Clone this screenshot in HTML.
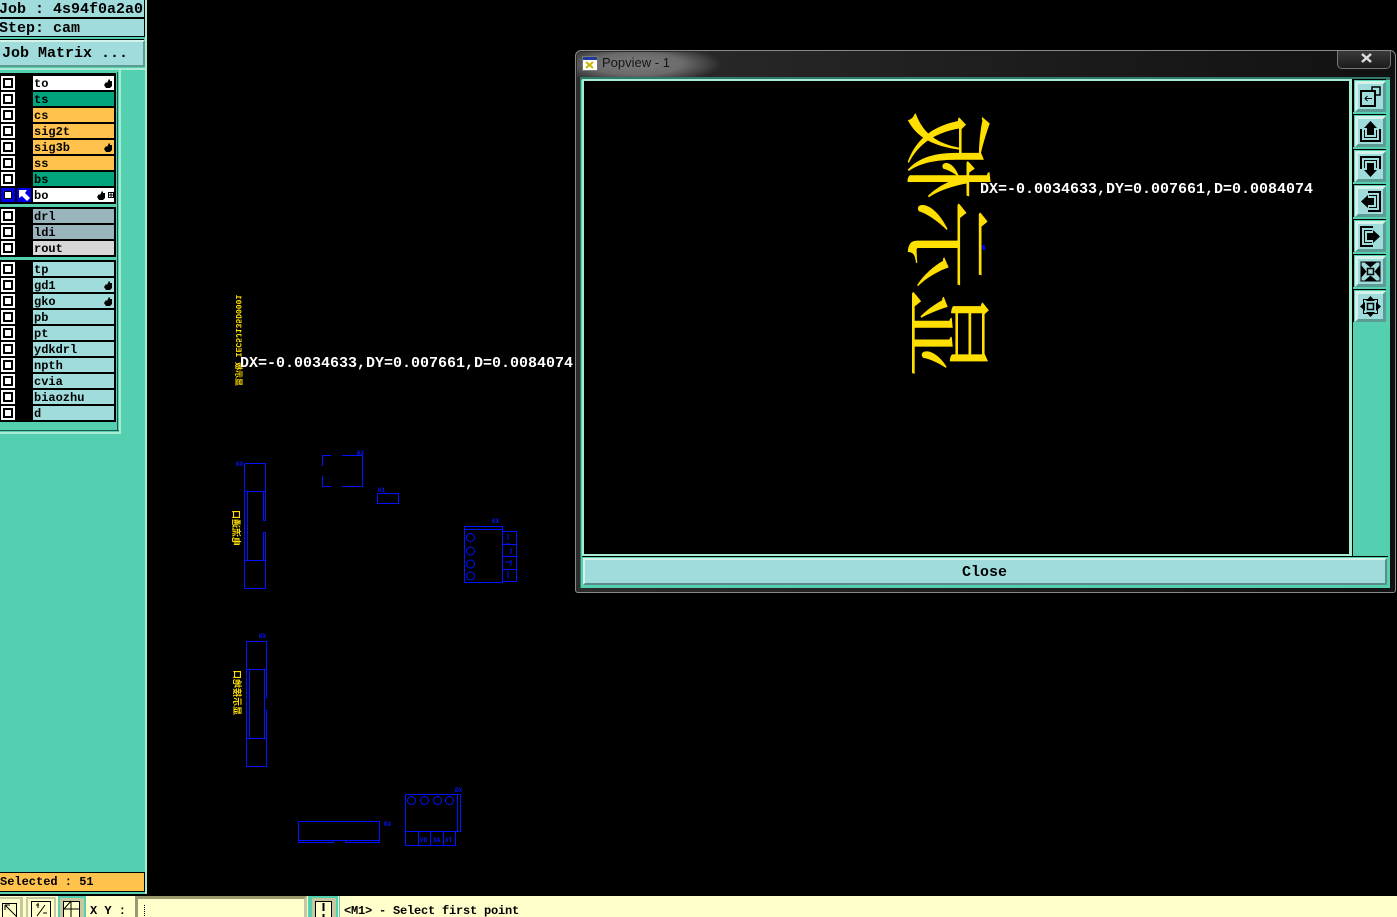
<!DOCTYPE html>
<html>
<head>
<meta charset="utf-8">
<style>
html,body{margin:0;padding:0;background:#000;}
#p{position:relative;width:1397px;height:917px;overflow:hidden;background:#000;font-family:"Liberation Mono","Noto Sans CJK SC",monospace;font-weight:bold;color:#000;}
#p div,#p svg{position:absolute;}
.t{white-space:pre;}
.r{left:33px;width:81px;height:14px;font-size:12px;line-height:16px;padding:0;text-indent:1px;white-space:pre;}
.c{left:1px;width:10px;height:10px;border:2px solid #fff;outline:0;background:#000;box-shadow:none;}
.c i{position:absolute;display:block;left:2px;top:2px;width:6px;height:6px;background:#fff;}
.w{background:#fff}.g{background:#00a57d}.o{background:#ffc34d}.s{background:#9ab4bc}.l{background:#d8d8d8}.b{background:#a0dcdc}
.btn{left:1355px;width:31px;height:31px;background:#a0dcdc;box-sizing:border-box;border:3px solid;border-color:#d4f2ea #5c9a94 #5c9a94 #d4f2ea;box-shadow:0 0 0 1px #54cfb0,-1px -1px 0 1px #000;}
.dx{color:#fff;font-size:15px;line-height:17px;white-space:pre;}
.y{color:#ffdf00;white-space:pre;transform-origin:0 0;transform:matrix(0,-1,-1,0,0,0);}
</style>
</head>
<body>
<div id="p">

<!-- left panel -->
<div style="left:0;top:0;width:146px;height:894px;background:#54cfb0"></div>
<div style="left:145px;top:0;width:2px;height:894px;background:#a8ecd4"></div>
<div style="left:0;top:0;width:144px;height:17px;background:#a0dcdc;border-right:1px solid #000;border-bottom:1px solid #000"></div>
<div class="t" style="left:-1px;top:1px;font-size:15px;line-height:17px">Job : 4s94f0a2a0</div>
<div style="left:0;top:18px;width:144px;height:17px;background:#a0dcdc;border:1px solid #000;border-left:0"></div>
<div class="t" style="left:-1px;top:20px;font-size:15px;line-height:17px;">Step: cam</div>
<div style="left:0;top:39px;width:144px;height:1px;background:#000"></div>
<div style="left:0;top:40px;width:143px;height:23px;background:#a0dcdc;border-top:2px solid #d4f2ea;border-right:2px solid #5c9a94;border-bottom:2px solid #5c9a94;box-sizing:content-box"></div>
<div class="t" style="left:2px;top:45px;font-size:15px;line-height:17px">Job Matrix ...</div>
<div style="left:0;top:68px;width:147px;height:2px;background:#a8ecd4"></div>
<div style="left:119px;top:70px;width:2px;height:364px;background:#a8ecd4"></div>
<div style="left:0;top:432px;width:121px;height:2px;background:#a8ecd4"></div>
<div style="left:0;top:430px;width:119px;height:1px;background:#1c5a4c"></div>
<div style="left:117px;top:72px;width:1px;height:359px;background:#1c5a4c"></div>

<!-- layer groups -->
<div style="left:0;top:73px;width:116px;height:131px;background:#000"></div>
<div style="left:0;top:207px;width:116px;height:50px;background:#000"></div>
<div style="left:0;top:260px;width:116px;height:162px;background:#000"></div>

<div class="r w" style="top:76px">to</div><div class="c" style="top:76px"><i></i></div>
<div class="r g" style="top:92px">ts</div><div class="c" style="top:92px"><i></i></div>
<div class="r o" style="top:108px">cs</div><div class="c" style="top:108px"><i></i></div>
<div class="r o" style="top:124px">sig2t</div><div class="c" style="top:124px"><i></i></div>
<div class="r o" style="top:140px">sig3b</div><div class="c" style="top:140px"><i></i></div>
<div class="r o" style="top:156px">ss</div><div class="c" style="top:156px"><i></i></div>
<div class="r g" style="top:172px">bs</div><div class="c" style="top:172px"><i></i></div>
<div class="r w" style="top:188px">bo</div>
<div style="left:1px;top:188px;width:14px;height:14px;background:#0000e8"></div>
<div style="left:4px;top:191px;width:8px;height:8px;background:#000"></div>
<div style="left:5px;top:192px;width:6px;height:6px;background:#fff"></div>
<div style="left:17px;top:188px;width:14px;height:14px;background:#0000e8"></div>
<svg style="left:17px;top:188px" width="14" height="14"><path d="M2 2H10L8 5 13 10 10 13 5 8 2 10Z" fill="#fff"/></svg>

<div class="r s" style="top:209px">drl</div><div class="c" style="top:209px"><i></i></div>
<div class="r s" style="top:225px">ldi</div><div class="c" style="top:225px"><i></i></div>
<div class="r l" style="top:241px">rout</div><div class="c" style="top:241px"><i></i></div>

<div class="r b" style="top:262px">tp</div><div class="c" style="top:262px"><i></i></div>
<div class="r b" style="top:278px">gd1</div><div class="c" style="top:278px"><i></i></div>
<div class="r b" style="top:294px">gko</div><div class="c" style="top:294px"><i></i></div>
<div class="r b" style="top:310px">pb</div><div class="c" style="top:310px"><i></i></div>
<div class="r b" style="top:326px">pt</div><div class="c" style="top:326px"><i></i></div>
<div class="r b" style="top:342px">ydkdrl</div><div class="c" style="top:342px"><i></i></div>
<div class="r b" style="top:358px">npth</div><div class="c" style="top:358px"><i></i></div>
<div class="r b" style="top:374px">cvia</div><div class="c" style="top:374px"><i></i></div>
<div class="r b" style="top:390px">biaozhu</div><div class="c" style="top:390px"><i></i></div>
<div class="r b" style="top:406px">d</div><div class="c" style="top:406px"><i></i></div>

<!-- hand markers -->
<svg style="left:0;top:0" width="120" height="310">
<defs><path id="h" d="M0 6L2 3 3 4 5 0 6 1 6 2 8 2V7L6 9H2Z" fill="#000"/></defs>
<use href="#h" x="104" y="79"/><use href="#h" x="104" y="143"/><use href="#h" x="97" y="191"/>
<use href="#h" x="104" y="281"/><use href="#h" x="104" y="297"/>
<path d="M108.500 192.500h5v5h-5zM111 192v6M108 195h6" fill="none" stroke="#000" stroke-width="1"/>
</svg>

<!-- selected -->
<div style="left:0;top:872px;width:144px;height:18px;background:#ffc34d;border:1px solid #000;border-left:0"></div>
<div class="t" style="left:0;top:874px;font-size:12px;line-height:17px">Selected : 51</div>

<!-- bottom bar -->
<div style="left:0;top:896px;width:1397px;height:21px;background:#ffffcc"></div>
<div style="left:0;top:897px;width:23px;height:20px;background:#ffffcc;border-top:2px solid #c8c8a0;border-right:3px solid #c8c8a0;box-sizing:border-box"></div>
<div style="left:26px;top:897px;width:30px;height:20px;border:2px solid #c8c8a0;border-bottom:0;box-sizing:border-box"></div>
<div style="left:58px;top:896px;width:28px;height:21px;border:2px solid #54cfb0;border-bottom:0;box-sizing:border-box;background:#c8c8a0"></div>
<div style="left:63px;top:901px;width:17px;height:16px;background:#ffffcc;border:1px solid #000;border-bottom:0;box-sizing:border-box"></div>
<div style="left:308px;top:896px;width:2px;height:21px;background:#54cfb0"></div>
<div style="left:310px;top:896px;width:28px;height:21px;border:2px solid #54cfb0;border-bottom:0;box-sizing:border-box;background:#c8c8a0"></div>
<div style="left:339px;top:896px;width:1px;height:21px;background:#54cfb0"></div>
<div style="left:315px;top:901px;width:17px;height:16px;background:#ffffcc;border:1px solid #000;border-bottom:0;box-sizing:border-box"></div>
<div style="left:135px;top:896px;width:172px;height:21px;box-sizing:border-box;border:3px solid #c8c8a0;border-top:3px solid #9a9a70;border-left:3px solid #9a9a70;border-bottom:0"></div>
<svg style="left:0;top:896px" width="345" height="21">
<path d="M2.500 21V7.500H16.500V21M5 9V14M5 9H10M5 9L16 20" fill="none" stroke="#000"/>
<path d="M31.500 21V5.500H50.500V21M37 20L45 9" fill="none" stroke="#000"/>
<path d="M36 9h3M38 7v5M43 17h4" stroke="#000"/>
<path d="M64 13H79M71 5V21M71 5 64 13" fill="none" stroke="#000"/>
<path d="M323.500 7v8M323.500 18v3" stroke="#000" stroke-width="2"/>
<path d="M144.500 9v12" stroke="#000" stroke-dasharray="1 1"/>
</svg>
<div class="t" style="left:90px;top:904px;font-size:12px;line-height:15px">X Y :</div>
<div class="t" style="left:344px;top:904px;font-size:12px;line-height:15px;letter-spacing:-.2px">&lt;M1&gt; - Select first point</div>

<!-- drawing -->
<svg style="left:0;top:0" width="580" height="880" fill="none" stroke="#0014ff" stroke-width="1">
<g shape-rendering="crispEdges">
<path d="M244.500 463.500H265.500V520.500H263.500M263.500 532.500H265.500V588.500H244.500V463.500M244.500 491.500H265.500M244.500 560.500H265.500M247.500 491.500V560.500M263.500 491.500V520.500M263.500 532.500V560.500"/>
<path d="M331 455.500H322.500V466M322.500 476V486.500H331M342 486.500H362.500V455.500H342"/>
<path d="M377.500 493.500H398.500V503.500H377.500V493.500"/>
<path d="M464.500 526.500H502.500V582.500H464.500V526.500M464.500 529.500H502.500M503 531.500H516.500V581.500H503M503 544.500H516.500M503 556.500H516.500M503 569.500H516.500"/>
<path d="M246.500 641.500H266.500V697.500H264.500M264.500 710.500H266.500V766.500H246.500V641.500M246.500 669.500H266.500M246.500 738.500H266.500M249.500 669.500V738.500M264.500 669.500V738.500"/>
<path d="M298.500 821.500H379.500V842.500H345.500V840.500M333.500 840.500V842.500H298.500V821.500M298.500 840.500H379.500"/>
<path d="M405.500 794.500H460.500V831.500H405.500V794.500M457.500 794.500V831.500M405.500 831.500V845.500H455.500V831.500M418.500 831.500V845.500M430.500 831.500V845.500M443.500 831.500V845.500"/>
<path d="M508 534V540M505 544h5M511 548V554M511 560V566M505 562h6M508 571V578"/>
</g>
<circle cx="470.500" cy="537.500" r="4"/><circle cx="470.500" cy="551" r="4"/><circle cx="470.500" cy="564" r="4"/><circle cx="470.500" cy="576" r="4"/>
<circle cx="411.500" cy="800.500" r="4"/><circle cx="424.500" cy="800.500" r="4"/><circle cx="437.500" cy="800.500" r="4"/><circle cx="449.500" cy="800.500" r="4"/>
<g fill="#0014ff" stroke="none" font-family="Liberation Mono,monospace" font-size="6" font-weight="bold">
<text x="236" y="466">KX</text><text x="357" y="455">KX</text><text x="378" y="492">K1</text><text x="492" y="523">KX</text>
<text x="259" y="638">KX</text><text x="384" y="826">KX</text><text x="455" y="792">DX</text>
<text x="420" y="842">VD</text><text x="433" y="842">XA</text><text x="445" y="842">XT</text>
</g>
</svg>

<!-- small yellow labels -->
<div class="y" style="left:242px;top:386px;font-family:'Liberation Mono','Noto Sans CJK SC',monospace;font-size:8px;line-height:9px;">显示板 IEC5J135D0001</div>
<div class="y" style="left:240px;top:546px;font-family:'Liberation Sans','Noto Sans CJK SC',sans-serif;font-size:9px;line-height:9px;">电流通口</div>
<div class="y" style="left:241px;top:715px;font-family:'Liberation Sans','Noto Sans CJK SC',sans-serif;font-size:9px;line-height:9px;">显示接地口</div>

<div class="dx" style="left:240px;top:355px">DX=-0.0034633,DY=0.007661,D=0.0084074</div>

<!-- popup window -->
<div style="left:575px;top:50px;width:821px;height:543px;box-sizing:border-box;border:1px solid #8a8a8a;border-radius:6px 6px 3px 3px;background:linear-gradient(90deg,#2c2c2c,#1b1b1b 60%,#111);"></div>
<div style="left:577px;top:52px;width:160px;height:25px;background:radial-gradient(ellipse 85px 20px at 60px 12px,#7c7c7c 0%,#6a6a6a 55%,rgba(50,50,50,0) 100%)"></div>
<div style="left:1337px;top:51px;width:54px;height:18px;box-sizing:border-box;border:1px solid #777;border-top:0;border-radius:0 0 5px 5px;background:linear-gradient(#3a3a3a,#1c1c1c)"></div>
<svg style="left:1360px;top:52px" width="14" height="12"><path d="M2 2L11 10M11 2L2 10" stroke="#ddd" stroke-width="2.500"/></svg>
<svg style="left:582px;top:56px" width="16" height="15">
<rect x=".5" y=".5" width="15" height="14" fill="#fff" stroke="#777"/>
<rect x="1" y="1" width="14" height="3" fill="#223a98"/>
<path d="M4 6L11 12M11 6L4 12" stroke="#c8b800" stroke-width="2"/>
</svg>
<div class="t" style="left:602px;top:54px;font-family:'Liberation Sans',sans-serif;font-weight:normal;font-size:13px;line-height:17px;color:#141414">Popview - 1</div>

<div style="left:580px;top:77px;width:810px;height:511px;background:#54cfb0;border-top:3px solid #2f7a68;box-sizing:border-box"></div>
<div style="left:580px;top:78px;width:1px;height:510px;background:#2f7a68"></div>
<div style="left:582px;top:79px;width:770px;height:478px;background:#a8ecd4"></div>
<div style="left:584px;top:81px;width:765px;height:473px;background:#000"></div>
<div style="left:1352px;top:79px;width:1px;height:477px;background:#000"></div>
<div style="left:582px;top:556px;width:806px;height:1px;background:#000"></div>

<div class="btn" style="top:81px"></div>
<div class="btn" style="top:116px"></div>
<div class="btn" style="top:151px"></div>
<div class="btn" style="top:186px"></div>
<div class="btn" style="top:221px"></div>
<div class="btn" style="top:256px"></div>
<div class="btn" style="top:291px"></div>
<svg style="left:1354px;top:80px" width="33" height="245" fill="none" stroke="#000" stroke-width="2">
<!-- 1 -->
<path d="M7 11H21V26H7Z"/>
<path d="M18 12V7H26V15H21" stroke-width="1.500"/>
<path d="M18 18.500H11M13.500 16L11 18.500 13.500 21" stroke-width="1"/>
<!-- 2 up -->
<g transform="translate(0,35)">
<path d="M7 14V26H26V14"/>
<path d="M10.500 15V22.500H22.500V15" stroke-width="1"/>
<path d="M16.500 6L23 13H20V20H13V13H10Z" fill="#000" stroke="none"/>
</g>
<!-- 3 down -->
<g transform="translate(0,70)">
<path d="M7 19V7H26V19"/>
<path d="M10.500 18V10.500H22.500V18" stroke-width="1"/>
<path d="M16.500 27L23 20H20V13H13V20H10Z" fill="#000" stroke="none"/>
</g>
<!-- 4 left -->
<g transform="translate(0,105)">
<path d="M14 7H26V26H14"/>
<path d="M15 10.500H22.500V22.500H15" stroke-width="1"/>
<path d="M7 16.500L14 10V13H20V20H14V23Z" fill="#000" stroke="none"/>
</g>
<!-- 5 right -->
<g transform="translate(0,140)">
<path d="M19 7H7V26H19"/>
<path d="M18 10.500H10.500V22.500H18" stroke-width="1"/>
<path d="M26 16.500L19 10V13H13V20H19V23Z" fill="#000" stroke="none"/>
</g>
<!-- 6 in -->
<g transform="translate(0,175)">
<path d="M7 7H26V26H7Z" stroke-width="1"/>
<path d="M13.500 13.500H19.500V19.500H13.500Z" stroke-width="1.500"/>
<g fill="#000" stroke="none">
<path d="M10 7H23L16.500 12.500ZM10 26H23L16.500 20.500ZM7 10V23L12.500 16.500ZM26 10V23L20.500 16.500Z"/>
</g>
</g>
<!-- 7 out -->
<g transform="translate(0,210)">
<path d="M9.500 9.500H23.500V23.500H9.500Z" stroke-width="1"/>
<path d="M13.500 13.500H19.500V19.500H13.500Z" stroke-width="1.500"/>
<g fill="#000" stroke="none">
<path d="M16.500 6L21 11H12ZM16.500 27L21 22H12ZM6 16.500L11 12V21ZM27 16.500L22 12V21Z"/>
</g>
</g>
</svg>

<!-- Close -->
<div style="left:583px;top:558px;width:804px;height:27px;box-sizing:border-box;background:#a0dcdc;border:2px solid;border-color:#d4f2ea #5c8a88 #5c8a88 #d4f2ea"></div>
<div class="t" style="left:962px;top:564px;font-size:15px;line-height:17px;">Close</div>

<!-- canvas glyphs -->
<div class="y" style="left:997px;top:378px;font-family:'Noto Serif CJK SC','Noto Sans CJK SC',serif;font-weight:500;font-size:89px;line-height:89px;">显示板</div>
<div style="left:982px;top:245px;width:3px;height:5px;background:#0000ff"></div>
<div class="dx" style="left:980px;top:181px">DX=-0.0034633,DY=0.007661,D=0.0084074</div>

</div>
</body>
</html>
